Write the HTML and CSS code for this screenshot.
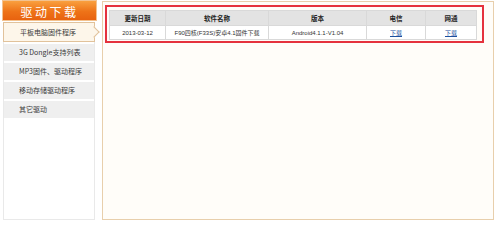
FILE: index.html
```html
<!DOCTYPE html>
<html lang="zh-CN">
<head>
<meta charset="utf-8">
<title>驱动下载</title>
<link rel="stylesheet" href="styles.css">
</head>
<body>
<div class="page">
  <aside class="sidebar">
    <div class="side-title">驱动下载</div>
    <ul class="side-list">
      <li class="side-item active">平板电脑固件程序</li>
      <li class="side-item">3G Dongle支持列表</li>
      <li class="side-item">MP3固件、驱动程序</li>
      <li class="side-item">移动存储驱动程序</li>
      <li class="side-item">其它驱动</li>
    </ul>
  </aside>
  <main class="content">
    <div class="highlight">
      <table class="dl-table">
        <colgroup>
          <col class="c-date">
          <col class="c-name">
          <col class="c-ver">
          <col class="c-tel">
          <col class="c-cnc">
        </colgroup>
        <thead>
          <tr><th>更新日期</th><th>软件名称</th><th>版本</th><th>电信</th><th>网通</th></tr>
        </thead>
        <tbody>
          <tr>
            <td>2013-03-12</td>
            <td>F90四核(F33S)安卓4.1固件下载</td>
            <td>Android4.1.1-V1.04</td>
            <td><a href="#">下载</a></td>
            <td><a href="#">下载</a></td>
          </tr>
        </tbody>
      </table>
    </div>
  </main>
</div>
</body>
</html>
```
FILE: styles.css
```css
html, body {
  margin: 0;
  padding: 0;
  background: #ffffff;
}
body {
  width: 500px;
  height: 223px;
  overflow: hidden;
  font-family: "Noto Sans CJK SC", "Noto Sans", sans-serif;
}
.page {
  display: flex;
  align-items: flex-start;
  padding-left: 2px;
}
.sidebar {
  width: 95px;
  height: 220px;
  display: flex;
  flex-direction: column;
}
.side-title {
  height: 21px;
  line-height: 21px;
  text-align: center;
  color: #ffffff;
  font-size: 12px;
  letter-spacing: 2.5px;
  background: linear-gradient(#f9a03f, #ee7318 55%, #e8620f);
  border: 1px solid #f3c28f;
  box-sizing: border-box;
}
.side-list {
  list-style: none;
  margin: 1px 2px 0 1px;
  padding: 0;
  flex: 1;
  border: 1px solid #e9e9e9;
  border-top: none;
  background: #ffffff;
}
.side-item {
  position: relative;
  height: 17px;
  line-height: 17px;
  margin-bottom: 2px;
  padding-left: 15px;
  font-size: 7px;
  color: #3a3a3a;
  background: #efefef;
}
.side-item.active {
  height: 19px;
  line-height: 19px;
  margin-left: -1px;
  margin-right: -1px;
  padding-left: 16px;
  background: #fdf6ea;
  border: 1px solid #e1c29b;
  box-sizing: border-box;
  height: 20px;
}
.side-item.active::after {
  content: "";
  position: absolute;
  right: -4px;
  top: 5px;
  width: 7px;
  height: 7px;
  background: #fdf6ea;
  border-top: 1px solid #e1c29b;
  border-right: 1px solid #e1c29b;
  transform: rotate(45deg);
}
.content {
  margin-left: 5px;
  margin-top: 1px;
  width: 392px;
  height: 219px;
  box-sizing: border-box;
  border: 1px solid #e8cfac;
  background: #fffdf9;
  padding: 3px 0 0 2px;
}
.highlight {
  width: 375px;
  border: 2px solid #e5323e;
  padding: 3px 6px 1px 2px;
  box-sizing: content-box;
  width: 367px;
}
.dl-table {
  width: 367px;
  table-layout: fixed;
  border-collapse: collapse;
  font-family: "Liberation Sans", "Noto Sans CJK SC", sans-serif;
  font-size: 6px;
  color: #333333;
  background: #ffffff;
}
.c-date { width: 56px; }
.c-name { width: 103px; }
.c-ver { width: 98px; }
.c-tel { width: 59px; }
.c-cnc { width: 51px; }
.dl-table th,
.dl-table td {
  border: 1px solid #d9d9d9;
  text-align: center;
  padding: 0;
  white-space: nowrap;
}
.dl-table th {
  height: 14px;
  background: #e3e3e3;
  font-weight: bold;
  font-size: 6.5px;
  color: #222222;
}
.dl-table td {
  height: 13px;
}
.dl-table a {
  color: #1d4f9e;
  text-decoration: underline;
}
```
